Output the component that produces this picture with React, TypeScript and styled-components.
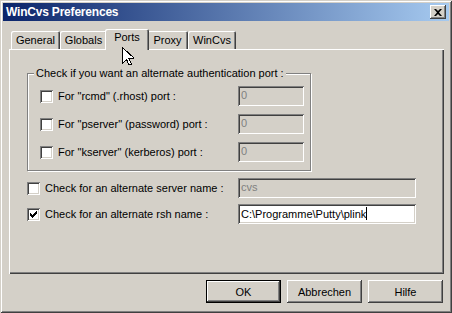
import React from "react"
import styled, { createGlobalStyle, css } from "styled-components"

const GlobalStyle = createGlobalStyle`
  html, body {
    margin: 0;
    padding: 0;
    background: #d4d0c8;
  }
  body {
    font-family: "Liberation Sans", Arial, sans-serif;
    font-size: 11px;
    color: #000;
  }
`

const raised = css`
  box-shadow: inset -1px -1px 0 #404040, inset 1px 1px 0 #fff,
    inset -2px -2px 0 #808080;
`

const sunken = css`
  box-shadow: inset 1px 1px 0 #808080, inset -1px -1px 0 #fff,
    inset 2px 2px 0 #404040, inset -2px -2px 0 #d4d0c8;
`

const Window = styled.div`
  position: relative;
  width: 452px;
  height: 313px;
  box-sizing: border-box;
  padding: 3px;
  background: #d4d0c8;
  box-shadow: inset 1px 1px 0 #d4d0c8, inset -1px -1px 0 #404040,
    inset 2px 2px 0 #fff, inset -2px -2px 0 #808080;
  display: flex;
  flex-direction: column;
`

const TitleBar = styled.div`
  height: 18px;
  display: flex;
  align-items: center;
  justify-content: space-between;
  padding: 0 3px 0 3px;
  background: linear-gradient(to right, #0a246a, #a6caf0);
  color: #fff;
  font-weight: bold;
  font-size: 12px;
  letter-spacing: -0.2px;
`

const CloseButton = styled.div`
  width: 16px;
  height: 14px;
  box-sizing: border-box;
  background: #d4d0c8;
  ${raised};
  display: flex;
  align-items: center;
  justify-content: center;
`

const Body = styled.div`
  padding: 8px 5px 0 6px;
  display: flex;
  flex-direction: column;
`

const TabRow = styled.div`
  display: flex;
  align-items: flex-end;
  padding-left: 2px;
  height: 20px;
`

const Tab = styled.div<{ $active?: boolean; $w: number }>`
  position: relative;
  box-sizing: border-box;
  width: ${(p) => p.$w}px;
  height: 18px;
  padding-top: 3px;
  text-align: center;
  background: #d4d0c8;
  border-top-left-radius: 2px;
  border-top-right-radius: 2px;
  box-shadow: inset 1px 1px 0 #fff, inset -1px 0 0 #404040,
    inset -2px 0 0 #808080;
  ${(p) =>
    p.$active &&
    css`
      height: 21px;
      margin: 0 -2px -1px;
      padding-top: 2px;
      z-index: 1;
    `}
`

const Panel = styled.div`
  box-sizing: border-box;
  height: 225px;
  padding: 24px 0 0 18px;
  background: #d4d0c8;
  box-shadow: inset 1px 1px 0 #fff, inset -1px -1px 0 #404040,
    inset -2px -2px 0 #808080;
  display: flex;
  flex-direction: column;
`

const GroupBox = styled.div`
  position: relative;
  width: 284px;
  box-sizing: border-box;
  padding: 12px 0 8px 12px;
  border: 1px solid #808080;
  box-shadow: inset 1px 1px 0 #fff, 1px 1px 0 #fff;
  display: grid;
  grid-template-columns: 198px 66px;
  row-gap: 8px;
  align-items: center;
`

const GroupCaption = styled.span`
  position: absolute;
  top: -7px;
  left: 6px;
  padding: 0 2px 0 2px;
  background: #d4d0c8;
`

const CheckRow = styled.label`
  display: flex;
  align-items: center;
  gap: 5px;
  white-space: nowrap;
`

const Box = styled.span`
  width: 13px;
  height: 13px;
  box-sizing: border-box;
  background: #fff;
  ${sunken};
  display: flex;
  align-items: center;
  justify-content: center;
`

const Field = styled.div<{ $disabled?: boolean; $w: number }>`
  width: ${(p) => p.$w}px;
  height: 20px;
  box-sizing: border-box;
  padding: 3px 3px 0 3px;
  white-space: nowrap;
  background: ${(p) => (p.$disabled ? "#d4d0c8" : "#fff")};
  color: ${(p) => (p.$disabled ? "#808080" : "#000")};
  ${sunken};
`

const Caret = styled.span`
  display: inline-block;
  width: 1px;
  height: 13px;
  background: #000;
  vertical-align: -2px;
`

const OuterRows = styled.div`
  margin-top: 7px;
  display: grid;
  grid-template-columns: 211px 178px;
  row-gap: 6px;
  align-items: center;
`

const ButtonRow = styled.div`
  display: flex;
  justify-content: flex-end;
  gap: 6px;
  margin-top: 6px;
  padding-right: 1px;
`

const Button = styled.div<{ $default?: boolean }>`
  width: 75px;
  height: 23px;
  box-sizing: border-box;
  display: flex;
  align-items: center;
  justify-content: center;
  background: #d4d0c8;
  ${raised};
  ${(p) =>
    p.$default &&
    css`
      box-shadow: inset 0 0 0 1px #000, inset -2px -2px 0 #404040,
        inset 2px 2px 0 #fff, inset -3px -3px 0 #808080;
    `}
`

const Cursor = styled.svg`
  position: absolute;
  left: 122px;
  top: 47px;
  z-index: 5;
`

const Check = () => (
  <svg width="7" height="7" viewBox="0 0 7 7">
    <path d="M0 2h1v1h1v1h1V3h1V2h1V1h1V0h1v3H6v1H5v1H4v1H3v1H2V6H1V5H0z" fill="#000" />
  </svg>
)

const CheckBox = ({ checked, label }: { checked?: boolean; label: string }) => (
  <CheckRow>
    <Box>{checked && <Check />}</Box>
    {label}
  </CheckRow>
)

const ports = [
  'For "rcmd" (.rhost) port :',
  'For "pserver" (password) port :',
  'For "kserver" (kerberos) port :'
]

const tabs = [
  { label: "General", w: 49 },
  { label: "Globals", w: 47 },
  { label: "Ports", w: 40 },
  { label: "Proxy", w: 41 },
  { label: "WinCvs", w: 48 }
]

export default function App() {
  return (
    <>
      <GlobalStyle />
      <Window>
        <TitleBar>
          WinCvs Preferences
          <CloseButton>
            <svg width="8" height="7" viewBox="0 0 8 7">
              <path d="M0 0h2l2 2 2-2h2L5 3.5 8 7H6L4 5 2 7H0l3-3.5z" fill="#000" />
            </svg>
          </CloseButton>
        </TitleBar>
        <Body>
          <TabRow>
            {tabs.map((t) => (
              <Tab key={t.label} $w={t.label === "Ports" ? t.w + 4 : t.w} $active={t.label === "Ports"}>
                {t.label}
              </Tab>
            ))}
          </TabRow>
          <Panel>
            <GroupBox>
              <GroupCaption>Check if you want an alternate authentication port :</GroupCaption>
              {ports.map((p) => (
                <React.Fragment key={p}>
                  <CheckBox label={p} />
                  <Field $disabled $w={66}>0</Field>
                </React.Fragment>
              ))}
            </GroupBox>
            <OuterRows>
              <CheckBox label="Check for an alternate server name :" />
              <Field $disabled $w={178}>cvs</Field>
              <CheckBox checked label="Check for an alternate rsh name :" />
              <Field $w={178}>
                C:\Programme\Putty\plink
                <Caret />
              </Field>
            </OuterRows>
          </Panel>
          <ButtonRow>
            <Button $default>OK</Button>
            <Button>Abbrechen</Button>
            <Button>Hilfe</Button>
          </ButtonRow>
        </Body>
        <Cursor width="12" height="19" viewBox="0 0 12 19">
          <path
            d="M0.5 0.5v16l4-4 2.5 5.5 2.5-1-2.5-5.5h5.5z"
            fill="#fff"
            stroke="#000"
            strokeWidth="1"
            shapeRendering="crispEdges"
          />
        </Cursor>
      </Window>
    </>
  )
}
